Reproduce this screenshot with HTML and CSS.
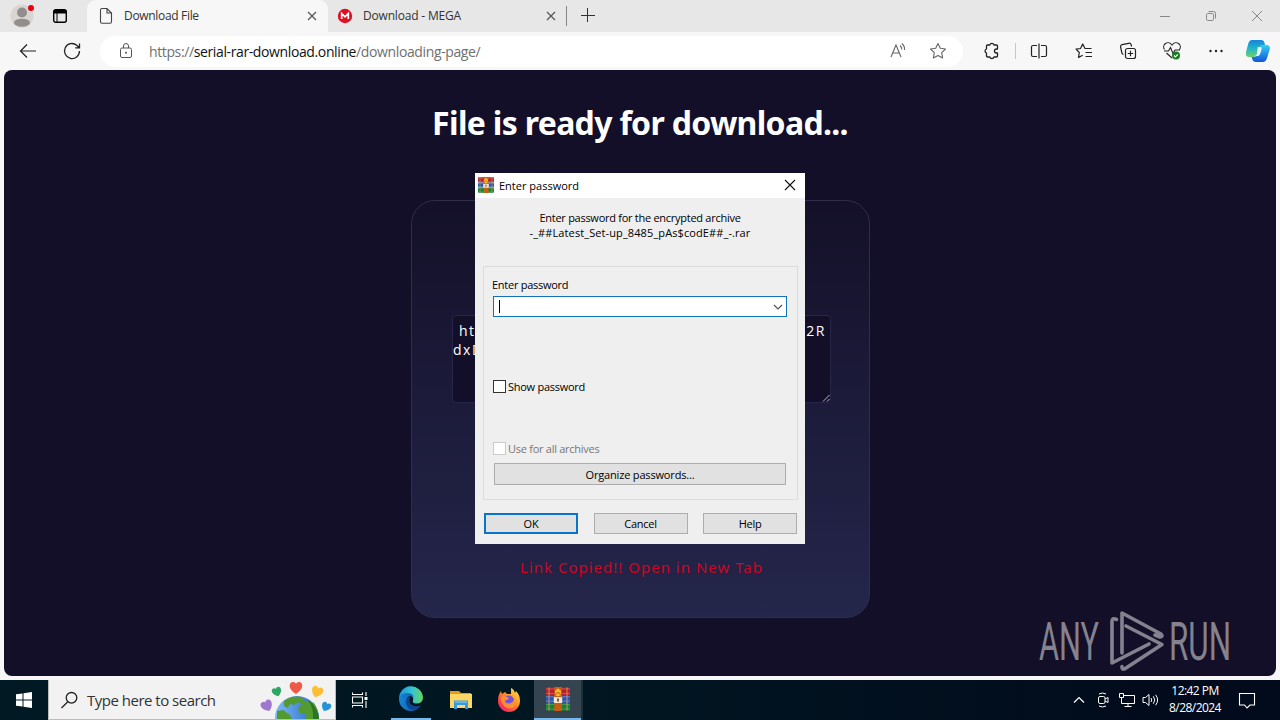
FILE: index.html
```html
<!DOCTYPE html>
<html lang="en">
<head>
<meta charset="UTF-8">
<meta name="viewport" content="width=device-width, initial-scale=1.0">
<title>Download File</title>
<link rel="stylesheet" href="styles.css">
</head>
<body>
<div class="browser">
    <div class="tabstrip">
        <div class="profile">
            <svg width="24" height="24" viewBox="0 0 24 24"><circle cx="12" cy="12" r="11.5" fill="#d8d5d3"/><circle cx="12" cy="8.5" r="5" fill="#918e8c"/><ellipse cx="12" cy="18.7" rx="8" ry="4" fill="#918e8c"/></svg>
            <span class="dot"></span>
        </div>
        <div class="workspace">
            <svg width="16" height="16" viewBox="0 0 16 16"><rect x="1.7" y="1.7" width="12.6" height="12.6" rx="2" fill="none" stroke="#000" stroke-width="1.4"/><path d="M2 2h12v3.5H2z"/><path d="M5 5v9" stroke="#000"/></svg>
        </div>
        <div class="tab active">
            <svg width="16" height="18" viewBox="0 0 16 18" fill="none" stroke="#444" stroke-width="1.1"><path d="M3.8 1.5H9L13.5 6v8.8a1.5 1.5 0 0 1-1.5 1.5H4a1.5 1.5 0 0 1-1.5-1.5V3a1.5 1.5 0 0 1 1.3-1.5zM9 1.5V6h4.5"/></svg>
            <span class="tab-title title-file">Download File</span>
            <svg class="close" width="10" height="10" viewBox="0 0 10 10"><path d="M1 1l8 8M9 1L1 9" stroke="#555" stroke-width="1.2"/></svg>
        </div>
        <div class="tab">
            <svg width="16" height="16" viewBox="0 0 16 16"><circle cx="8" cy="8" r="7.2" fill="#df1024"/><path d="M4.7 11V5.5L8 8.8l3.3-3.3V11" fill="none" stroke="#fff" stroke-width="1.7"/></svg>
            <span class="tab-title title-mega">Download - MEGA</span>
            <svg class="close" width="10" height="10" viewBox="0 0 10 10"><path d="M1 1l8 8M9 1L1 9" stroke="#555" stroke-width="1.2"/></svg>
        </div>
        <div class="new-tab">
            <svg width="14" height="14" viewBox="0 0 14 14"><path d="M6.5 0v14M0 7.500h14" stroke="#333"/></svg>
        </div>
        <div class="window-buttons">
            <span><svg width="12" height="12" viewBox="0 0 12 12"><path d="M1 6.5h10" stroke="#888"/></svg></span>
            <span><svg width="12" height="12" viewBox="0 0 12 12" fill="none" stroke="#888"><rect x="1.5" y="3.5" width="7" height="7" rx="1.2"/><path d="M3.5 1.5h5a2 2 0 0 1 2 2v5"/></svg></span>
            <span><svg width="12" height="12" viewBox="0 0 12 12"><path d="M1 1l10 10M11 1L1 11" stroke="#888"/></svg></span>
        </div>
    </div>

    <div class="toolbar">
        <span class="tool"><svg width="20" height="20" viewBox="0 0 20 20" fill="none" stroke="#222" stroke-width="1.2"><path d="M18 10H2.5M9 3.5L2.5 10 9 16.5"/></svg></span>
        <span class="tool"><svg width="20" height="20" viewBox="0 0 20 20" fill="none" stroke="#222" stroke-width="1.3"><path d="M17.5 10a7.5 7.5 0 1 1-2.8-5.8L17 6.5M17.5 2.5v4.3h-4.3"/></svg></span>
        <div class="address">
            <svg class="lock" width="14" height="18" viewBox="0 0 14 18"><rect x="1.5" y="6" width="11" height="9.5" rx="1.5" fill="none" stroke="#555"/><path d="M4.500 6V4a2.500 2.500 0 0 1 5 0v2" fill="none" stroke="#555"/><circle cx="7" cy="10.8" r="1" fill="#555"/></svg>
            <span class="url">https://<b>serial-rar-download.online</b>/downloading-page/</span>
            <svg class="read-aloud" width="18" height="18" viewBox="0 0 18 18" fill="none" stroke="#666" stroke-width="1.1"><path d="M2 15L7 3l5 12M3.7 11h6.700M11 3.500q2 1.700 1.800 4M12.800 1.500Q16 4 15.500 8"/></svg>
            <svg width="18" height="18" viewBox="0 0 18 18" fill="none" stroke="#666" stroke-width="1.1" stroke-linejoin="round"><path d="M9 1.500l2.300 4.800 5.200.7-3.800 3.700.9 5.200L9 13.400l-4.600 2.500.9-5.200L1.500 7l5.200-.7z"/></svg>
        </div>
        <span class="tool extensions"><svg width="18" height="18" viewBox="0 0 18 18" fill="none" stroke="#222" stroke-width="1.3" stroke-linejoin="round"><path d="M4.500 3h2.300a2.200 2.200 0 0 1 4.200 0h2.500a1 1 0 0 1 1 1v3h-1a2 2 0 0 0 0 4h1v3a1 1 0 0 1-1 1H11a2.200 2.200 0 0 1-4.200 0H4.500a1 1 0 0 1-1-1v-3a2.100 2.100 0 0 1 0-4V4a1 1 0 0 1 1-1z"/></svg></span>
        <span class="divider"></span>
        <span class="tool split"><svg width="18" height="16" viewBox="0 0 18 16" fill="none" stroke="#222" stroke-width="1.2"><path d="M7 2.500H3A1.500 1.500 0 0 0 1.500 4v8A1.500 1.500 0 0 0 3 13.500h4M11 2.500h4A1.500 1.500 0 0 1 16.500 4v8a1.500 1.500 0 0 1-1.500 1.500h-4M9 .5v15"/></svg></span>
        <span class="tool"><svg width="18" height="18" viewBox="0 0 18 18" fill="none" stroke="#222" stroke-width="1.2" stroke-linejoin="round"><path d="M16.500 6.500H10L7.700 2 5.500 6.500l-4.500.7 3.300 3.300-.8 5 4.200-2.300M10.500 10.500H17M10.500 14.500H17"/></svg></span>
        <span class="tool"><svg width="18" height="18" viewBox="0 0 18 18" fill="none" stroke="#222" stroke-width="1.2"><rect x="6.500" y="6.500" width="10" height="10" rx="2"/><path d="M11.500 8.800v5.400M8.800 11.500h5.400M4.500 12.500A2.500 2.500 0 0 1 2.700 10L1.600 5a2 2 0 0 1 1.500-2.400l6.500-1.300A2.200 2.200 0 0 1 12.200 3l.4 1.500"/></svg></span>
        <span class="tool"><svg width="18" height="18" viewBox="0 0 18 18" fill="none" stroke="#222" stroke-width="1.1"><path d="M1.500 7.500a4 4 0 0 1 7-5l.5.600.5-.6a4 4 0 0 1 7 5M1 9h4.500l2-3.500 2.500 6L12 8h5M3.500 11L9 16"/><circle cx="13" cy="13.500" r="4" fill="#197b24" stroke="none"/><path d="M11 13.500l1.400 1.400 2.500-2.600" stroke="#fff"/></svg></span>
        <span class="tool"><svg width="16" height="16" viewBox="0 0 16 16" fill="#222"><circle cx="2.500" cy="8" r="1.200"/><circle cx="8" cy="8" r="1.200"/><circle cx="13.500" cy="8" r="1.200"/></svg></span>
        <span class="copilot"><svg width="26" height="24" viewBox="0 0 26 24">
            <defs>
                <linearGradient id="cpA" x2="0" y2="1"><stop stop-color="#1684dc"/><stop offset=".5" stop-color="#21b6c5"/><stop offset="1" stop-color="#6fd069"/></linearGradient>
                <linearGradient id="cpB" x2="0" y2="1"><stop stop-color="#34cff2"/><stop offset="1" stop-color="#1254d9"/></linearGradient>
            </defs>
            <path d="M7 1h9q3 0 3.500 3l1 4h-3q-3 0-4 3l-1.500 5q-.7 2-3 2H4q-4 0-3-5L3.500 4Q4.500 1 7 1z" fill="url(#cpA)"/>
            <path d="M17 6h4.500q4.300 0 3.200 4.500L22 19q-1 4-4.500 4H11q-3 0-3.800-3L6.500 18H9q2.500 0 3.300-2.500L14.500 8Q15 6 17 6z" fill="url(#cpB)"/>
            <path d="M12.800 8h2.800q1.500 0 1 2l-1.500 5q-.6 2-2.500 2H9.800q1.600-.3 2.100-2z" fill="#e8faff"/>
        </svg></span>
    </div>

    <div class="page">
        <h1>File is ready for download...</h1>
        <div class="card">
            <div class="link-box">
                <div class="link-line first"><span>ht</span><span>2R</span></div>
                <div class="link-line">dxD</div>
                <svg class="grip" width="8" height="8" viewBox="0 0 8 8"><path d="M1 7.500L7.500 1M5 7.500L7.500 5" stroke="#c9c9d6" stroke-width=".9"/></svg>
            </div>
            <p class="copied">Link Copied!! Open in New Tab</p>
        </div>
    </div>
</div>

<svg class="watermark" width="204" height="66" viewBox="0 0 204 66">
    <text x="0" y="51" textLength="60" lengthAdjust="spacingAndGlyphs">ANY</text>
    <text x="130" y="51" textLength="62" lengthAdjust="spacingAndGlyphs">RUN</text>
    <g fill="none" stroke="#85828f" stroke-width="3.6" stroke-linejoin="round" stroke-linecap="round">
        <path d="M77.500 10.500q-4.500-2-4.500 2V54l37-19"/>
        <path d="M83 44V4l39 21q2.500 2.500-1 3l-5-2"/>
        <path d="M87 17l36 18.500L85.500 60q-3 .5-2.500-2.500"/>
    </g>
</svg>

<div class="dialog">
    <div class="dialog-title">
        <svg width="16" height="16" viewBox="0 0 16 16"><use href="#books"/></svg>
        <span>Enter password</span>
        <svg class="dialog-close" width="12" height="12" viewBox="0 0 12 12"><path d="M1 1l10 10M11 1L1 11" stroke="#111" stroke-width="1.1"/></svg>
    </div>
    <div class="dialog-text">
        <div class="archive-label">Enter password for the encrypted archive</div>
        <div class="archive-name">-_##Latest_Set-up_8485_pAs$codE##_-.rar</div>
    </div>
    <div class="group">
        <label class="field-label">Enter password</label>
        <div class="combo">
            <span class="caret"></span>
            <svg width="10" height="6" viewBox="0 0 10 6"><path d="M1 1l4 4 4-4" fill="none" stroke="#555" stroke-width="1.2"/></svg>
        </div>
        <div class="check show"><i></i><span>Show password</span></div>
        <div class="check disabled"><i></i><span>Use for all archives</span></div>
        <div class="btn wide">Organize passwords...</div>
    </div>
    <div class="buttons">
        <div class="btn default">OK</div>
        <div class="btn">Cancel</div>
        <div class="btn">Help</div>
    </div>
</div>

<div class="taskbar">
    <div class="start"><svg width="16" height="16" viewBox="0 0 16 16" fill="#fff"><path d="M0 2.300L6.500 1.400v6.100H0zM7.500 1.200L16 0v7.500H7.500zM0 8.500h6.500v6.100L0 13.700zM7.500 8.500H16V16l-8.500-1.200z"/></svg></div>
    <div class="search">
        <svg width="18" height="18" viewBox="0 0 18 18" fill="none" stroke="#222" stroke-width="1.3"><circle cx="10.500" cy="6.800" r="5.300"/><path d="M6.800 10.700L.5 17"/></svg>
        <span>Type here to search</span>
        <svg class="earth" width="74" height="39" viewBox="0 0 74 39">
            <defs>
                <linearGradient id="sea"><stop stop-color="#7eb8f5"/><stop offset="1" stop-color="#2467c8"/></linearGradient>
                <path id="heart" d="M0 5C-7 1-6-5-2.500-5Q-.5-5 0-3.500 .5-5 2.500-5C6-5 7 1 0 5z"/>
            </defs>
            <circle cx="37" cy="38" r="22" fill="url(#sea)"/>
            <path d="M24 21q8-6 17-4l5 5-5 2-3-2-4 3-4-1-2 4-4-2zM38 28l8-7 8 2q4 6 5 16H46l-1-5-6-1zM17 31l6-1 7 5 2 4H17z" fill="#539a31"/>
            <path d="M48 20q10 7 11 19h-6q1-11-5-19" fill="#2e751f"/>
            <use href="#heart" transform="translate(36 8) scale(1.200)" fill="#ee5948"/>
            <use href="#heart" transform="translate(17 12) rotate(-20) scale(.9)" fill="#2da566"/>
            <use href="#heart" transform="translate(57 12) rotate(20) scale(1.100)" fill="#fdbd35"/>
            <use href="#heart" transform="translate(7 26) rotate(-25) scale(1.100)" fill="#a077cf"/>
            <use href="#heart" transform="translate(66 27) rotate(25) scale(.9)" fill="#2693d5"/>
        </svg>
    </div>
    <div class="app"><svg width="16" height="16" viewBox="0 0 16 16" fill="none" stroke="#fff" stroke-width="1.1"><path d="M.5.5v2h10v-2M.5 15.500v-2h10v2M.5 5h10v6H.5zM14 0v4M14 9v7"/><path d="M14 5v3" stroke-width="3"/></svg></div>
    <div class="app running edge">
        <svg width="26" height="26" viewBox="0 0 26 26">
            <defs>
                <linearGradient id="edgeTop"><stop stop-color="#1e93df"/><stop offset=".55" stop-color="#36c3d2"/><stop offset="1" stop-color="#67d65a"/></linearGradient>
                <linearGradient id="edgeBody"><stop stop-color="#1686d3"/><stop offset="1" stop-color="#0c4fa5"/></linearGradient>
            </defs>
            <path d="M1 13A12 12 0 0 1 25 11.500q0 6-7 6-4 0-3-3 1-4-3-5-7-1-11 3.500z" fill="url(#edgeTop)"/>
            <path d="M1 13Q2 7 9 7q7 0 7 6 0-3-4-3-4 1-3 6 2 6 9 5 3 0 5-2-4 6-10 6A12 12 0 0 1 1 13z" fill="url(#edgeBody)"/>
            <path d="M12 10q-6 4-3 10 3 5 9 3.500 3-1 5-4.500-5 2.500-9 0-4-3-2-7z" fill="#0b4690"/>
        </svg>
    </div>
    <div class="app explorer"><svg width="22" height="20" viewBox="0 0 22 20"><path d="M0 1h9l2 2h10v4H0z" fill="#e69b20"/><path d="M0 4h22v14H0z" fill="#ffd664"/><path d="M4 10.500h14V19h-3v-4H7v4H4z" fill="#3998dc"/><path d="M5 11h12v2H5z" fill="#65b6e7"/></svg></div>
    <div class="app"><svg width="24" height="24" viewBox="0 0 24 24">
        <defs><linearGradient id="fox" x1="1" x2=".2" y2="1"><stop stop-color="#fff252"/><stop offset=".45" stop-color="#ff9725"/><stop offset=".8" stop-color="#ff3d4c"/><stop offset="1" stop-color="#ef227d"/></linearGradient></defs>
        <path d="M4 3l1 3 3-2 2 2 4 0V0q3 1 4 5l1-2q4 4 4 10a11 11 0 0 1-22 0Q1 7 4 3z" fill="url(#fox)"/>
        <circle cx="12" cy="12.500" r="5" fill="#7751dd"/><path d="M4 9q4-2 8 1-1 2-4 2.500 0 3 4 3 4-1 5-4 3 9-5 9-6-1-8-8z" fill="#ff9b24" opacity=".85"/>
    </svg></div>
    <div class="app running rar">
        <svg width="24" height="24" viewBox="0 0 16 16">
            <g id="books">
                <rect y=".3" width="16" height="5" rx=".7" fill="#b51e2e"/><path d="M0 1.300h16M0 4.300h16" stroke="#dc6770" stroke-width=".5"/>
                <rect y="5.500" width="16" height="5" rx=".7" fill="#2b55b5"/><path d="M0 6.500h16M0 9.500h16" stroke="#7592d8" stroke-width=".5"/>
                <rect y="10.700" width="16" height="5" rx=".7" fill="#13823a"/><path d="M0 11.700h16M0 14.700h16" stroke="#50a662" stroke-width=".5"/>
                <path d="M2 .3v15.400M14 .3v15.400" stroke="#d5a046" stroke-width=".6"/>
                <path d="M5.500 0h5v16h-5z" fill="#c95e12"/><path d="M6 6V2.500L8 .8l2 1.700V6z" fill="#ffb52e"/>
                <rect x="5.200" y="6.700" width="5.600" height="4" rx=".5" fill="#f5e8cb"/><path d="M6.500 7V5.200a1.500 1.500 0 0 1 3 0V7" fill="none" stroke="#c9771e" stroke-width=".8"/><path d="M8 7.700v2" stroke="#542718"/>
            </g>
        </svg>
    </div>
    <div class="app-edge"></div>
    <div class="tray">
        <svg class="t-arrow" width="12" height="8" viewBox="0 0 12 8"><path d="M1 6.500l5-5 5 5" fill="none" stroke="#fff" stroke-width="1.200"/></svg>
        <svg class="t-cam" width="12" height="16" viewBox="0 0 12 16" fill="none" stroke="#fff"><rect x="1.500" y="4.500" width="6.500" height="7" rx="1.500"/><path d="M8 7l3-1.500v5L8 9M2 2q3.500-2 7 0M2 14q3.500 2 7 0"/></svg>
        <svg class="t-net" width="18" height="14" viewBox="0 0 18 14" fill="none" stroke="#fff"><path d="M5.500 2.500h11v8h-13V6M6.500 13.500h7M10 10.500v3M1.500.5h4v4h-4zM3.500 4.500v2"/></svg>
        <svg class="t-sound" width="18" height="14" viewBox="0 0 18 14" fill="none" stroke="#fff"><path d="M1 4.500h2.500L7 1.500v11l-3.500-3H1zM9 5q1.500 2 0 4M11.300 3.300q3 3.700 0 7.400M13.600 1.800q4 5.200 0 10.400"/></svg>
        <div class="clock"><span class="time">12:42 PM</span><span class="date">8/28/2024</span></div>
        <svg class="t-notes" width="18" height="18" viewBox="0 0 18 18"><path d="M1.500 2.500h15v11.500h-4.500L9 17 6.500 14h-5z" fill="none" stroke="#fff" stroke-width="1.100"/></svg>
    </div>
</div>
</body>
</html>
```
FILE: styles.css
```css
* {
    box-sizing: border-box;
}
body {
    position: relative;
    width: 1280px;
    height: 720px;
    margin: 0;
    overflow: hidden;
    background: #f7f7f7;
    font-family: "Open Sans", "Noto Sans", sans-serif;
}
svg {
    display: block;
    flex-shrink: 0;
}
.browser {
    height: 680px;
}

/* tabs */
.tabstrip {
    display: flex;
    height: 32px;
    background: #e7e7e7;
}
.profile {
    position: relative;
    width: 46px;
    padding: 4px 0 0 10px;
}
.dot {
    position: absolute;
    left: 28px;
    top: 5px;
    width: 6px;
    height: 6px;
    border-radius: 50%;
    background: #e80012;
}
.workspace {
    width: 41px;
    padding: 8px 0 0 6px;
}
.tab {
    display: flex;
    align-items: center;
    width: 238px;
    padding: 0 10px 0 9px;
    font-size: 12px;
    color: #333;
}
.tab.active {
    width: 241px;
    padding: 0 11px 0 11px;
    background: #f7f7f7;
    border-radius: 9px 9px 0 0;
}
.tab-title {
    margin-left: 10px;
    line-height: 16px;
    white-space: nowrap;
}
.title-file {
    letter-spacing: -0.32px;
}
.title-mega {
    letter-spacing: -0.18px;
}
.close {
    margin-left: auto;
}
.new-tab {
    margin-top: 6px;
    padding: 2px 0 0 14px;
    height: 20px;
    border-left: 1px solid #888;
}
.window-buttons {
    display: flex;
    margin-left: auto;
}
.window-buttons span {
    display: flex;
    align-items: center;
    justify-content: center;
    width: 46px;
}

/* toolbar */
.toolbar {
    display: flex;
    align-items: center;
    height: 38px;
    padding-left: 6px;
}
.tool {
    display: flex;
    justify-content: center;
    width: 44px;
}
.address {
    display: flex;
    align-items: center;
    width: 863px;
    height: 31px;
    margin-left: 6px;
    padding: 0 16px 0 19px;
    border-radius: 16px;
    background: #fff;
}
.url {
    margin: 0 auto 0 16px;
    font-size: 14px;
    letter-spacing: -0.38px;
    color: #707070;
}
.url b {
    font-weight: 400;
    color: #111;
}
.read-aloud {
    margin-right: 22px;
}
.extensions {
    margin-left: 7px;
}
.divider {
    width: 1px;
    height: 16px;
    margin: 0 1px;
    background: #c8c8c8;
}
.tool.split {
    margin-right: 1px;
}
.copilot {
    margin-left: 7px;
}

/* download page */
.page {
    height: 606px;
    margin: 0 4px;
    padding-top: 31px;
    overflow: hidden;
    border-radius: 8px;
    background: #130f29;
    text-align: center;
}
h1 {
    margin: 0;
    line-height: 44px;
    font-family: "Noto Sans", sans-serif;
    font-size: 32px;
    letter-spacing: -0.68px;
    color: #fff;
}
.card {
    width: 459px;
    height: 418px;
    margin: 55px auto 0 407px;
    padding: 114px 38px 0 40px;
    border: 1px solid #302d4c;
    border-radius: 24px;
    background: linear-gradient(#141029, #24264b);
}
.link-box {
    position: relative;
    height: 88px;
    padding: 5px 4px 0 0;
    border: 1px solid #28254a;
    border-radius: 4px;
    background: #130f29;
    color: #fff;
    font-size: 14px;
    line-height: 19px;
    letter-spacing: 1.5px;
    text-align: left;
}
.link-line.first {
    display: flex;
    justify-content: space-between;
    padding-left: 6px;
}
.grip {
    position: absolute;
    right: 0;
    bottom: 0;
}
.copied {
    margin: 152px 0 0;
    color: #c9081f;
    font-family: "Noto Sans", sans-serif;
    font-size: 15px;
    line-height: 24px;
    letter-spacing: 1px;
    white-space: nowrap;
}
.watermark {
    position: absolute;
    left: 1039px;
    top: 609px;
}
.watermark text {
    font-family: Roboto, sans-serif;
    font-size: 53px;
    fill: #85828f;
}

/* password dialog */
.dialog {
    position: absolute;
    left: 475px;
    top: 173px;
    width: 330px;
    height: 371px;
    background: #efefef;
    color: #000;
    font-size: 11px;
    line-height: 15px;
    letter-spacing: -0.27px;
}
.dialog-title {
    display: flex;
    align-items: center;
    height: 25px;
    padding: 0 9px 1px 3px;
    background: #fff;
    letter-spacing: 0;
}
.dialog-title span {
    margin-left: 5px;
}
.dialog-close {
    margin-left: auto;
}
.dialog-text {
    height: 68px;
    padding-top: 12px;
    text-align: center;
}
.archive-name {
    letter-spacing: 0.1px;
}
.group {
    width: 315px;
    height: 234px;
    margin-left: 8px;
    padding: 10px 10px 0 9px;
    border: 1px solid #dcdcdc;
}
.field-label {
    display: block;
    margin-left: -1px;
}
.combo {
    display: flex;
    align-items: center;
    justify-content: space-between;
    width: 294px;
    height: 21px;
    margin-top: 4px;
    padding: 0 3px 0 5px;
    border: 1px solid #1272b9;
    background: #fff;
}
.caret {
    width: 1px;
    height: 13px;
    background: #000;
}
.check {
    display: flex;
    align-items: center;
    height: 15px;
}
.check i {
    width: 13px;
    height: 13px;
    margin-right: 2px;
    border: 1px solid #333;
    background: #fff;
}
.check.show {
    margin-top: 62px;
}
.check.disabled {
    margin-top: 47px;
    color: #777;
}
.check.disabled i {
    border-color: #ccc;
}
.btn {
    width: 94px;
    height: 21px;
    border: 1px solid #adadad;
    background: #e1e1e1;
    line-height: 20px;
    text-align: center;
}
.btn.wide {
    width: 292px;
    height: 22px;
    margin: 7px 0 0 1px;
    line-height: 21px;
    letter-spacing: -0.17px;
}
.btn.default {
    border: 2px solid #0874cc;
    line-height: 18px;
}
.buttons {
    display: flex;
    justify-content: space-between;
    margin: 13px 8px 0 9px;
}

/* taskbar */
.taskbar {
    display: flex;
    height: 40px;
    background: linear-gradient(90deg, #001923, #001621 45%, #020b1c 90%);
}
.start {
    width: 48px;
    padding: 12px 0 0 16px;
}
.search {
    display: flex;
    align-items: center;
    width: 288px;
    padding-left: 12px;
    border: 1px solid #bbb;
    border-top: 0;
    background: #f2f2f2;
    color: #333;
    font-size: 15px;
}
.search span {
    margin-left: 8px;
    letter-spacing: -0.5px;
    white-space: nowrap;
}
.earth {
    margin-left: auto;
    margin-right: 1px;
}
.app {
    display: flex;
    align-items: center;
    justify-content: center;
    width: 48px;
}
.running {
    border-bottom: 2px solid #76b9ed;
}
.app.edge {
    width: 40px;
    margin: 0 5px 0 7px;
}
.app.explorer {
    width: 49px;
}
.rar {
    margin-left: 1px;
    background: #35454f;
}
.app-edge {
    width: 2px;
    margin-left: -1px;
    background: #1b3038;
}
.tray {
    display: flex;
    align-items: center;
    margin-left: auto;
    padding-right: 24px;
    color: #fff;
}
.t-cam {
    margin-left: 12px;
}
.t-net {
    margin-left: 9px;
}
.t-sound {
    margin-left: 6px;
}
.clock {
    display: flex;
    flex-direction: column;
    align-items: center;
    width: 60px;
    margin: 0 13px 2px 5px;
    font-size: 12px;
    line-height: 17px;
    white-space: nowrap;
    letter-spacing: -0.55px;
}
```
